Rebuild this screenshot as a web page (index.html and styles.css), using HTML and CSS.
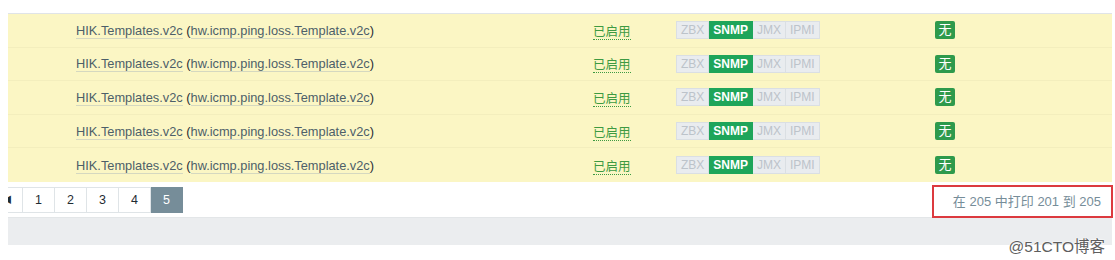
FILE: index.html
```html
<!DOCTYPE html>
<html lang="zh-CN">

<head>
    <meta charset="UTF-8" />
    <title>Templates</title>
    <link rel="stylesheet" href="styles.css">
</head>

<body>
    <div class="page">
        <table class="list-table">
            <tbody id="rows"></tbody>
        </table>
        <div class="paging-row">
            <div class="paging">
                <span class="page-btn page-prev">&#x25C0;</span>
                <span class="page-btn">1</span>
                <span class="page-btn">2</span>
                <span class="page-btn">3</span>
                <span class="page-btn">4</span>
                <span class="page-btn active">5</span>
            </div>
            <div class="table-stats">在 205 中打印 201 到 205</div>
        </div>
        <div class="footer-bar"></div>
    </div>
    <div class="watermark">@51CTO博客</div>

    <script>
        var rows = document.getElementById('rows');
        for (var i = 0; i < 5; i++) {
            var tr = document.createElement('tr');
            tr.innerHTML =
                '<td class="col-check"></td>' +
                '<td class="col-name"><a class="link">HIK.Templates.v2c</a> (<a class="link">hw.icmp.ping.loss.Template.v2c</a>)</td>' +
                '<td class="col-status"><span class="status-on">已启用</span></td>' +
                '<td class="col-avail"><span class="tag">ZBX</span><span class="tag tag-green">SNMP</span><span class="tag">JMX</span><span class="tag">IPMI</span></td>' +
                '<td class="col-enc"><span class="enc">无</span></td>';
            rows.appendChild(tr);
        }
    </script>
</body>

</html>
```

FILE: styles.css
```css
body {
    margin: 0;
    background: #fff;
    font-family: "Liberation Sans", Arial, "Noto Sans CJK SC", sans-serif;
    font-size: 12.8px;
    color: #1f2c33;
}

.page {
    margin: 0 3px 0 8px;
    padding-top: 13px;
}

.list-table {
    width: 100%;
    border-collapse: collapse;
    border-top: 1px solid #e0e4e7;
}

.list-table td {
    background: #fbf6c4;
    height: 32.6px;
    padding: 0;
    border-bottom: 1px solid #f3eebd;
    vertical-align: middle;
    white-space: nowrap;
}

.list-table tr:last-child td {
    border-bottom: none;
    height: 33.6px;
}

.col-check {
    width: 68px;
}

.col-name {
    width: 517px;
}

.col-status {
    width: 83px;
}

.col-avail {
    width: 259px;
}

.link {
    color: #4d5f69;
    border-bottom: 1px solid #d5d8c0;
}

.status-on {
    color: #3d9a42;
    border-bottom: 1px dotted #3d9a42;
    font-size: 12.5px;
}

.tag {
    display: inline-block;
    font-size: 12px;
    line-height: 16px;
    padding: 0 4px;
    background: #e9ecef;
    color: #bcc3ca;
    border: 1px solid #dadfe3;
    border-left: none;
}

.tag:first-child {
    border-left: 1px solid #dadfe3;
}

.tag-green {
    background: #1ea55a;
    border-color: #1ea55a;
    color: #fff;
    font-weight: bold;
}

.enc {
    display: inline-block;
    width: 20px;
    height: 18px;
    line-height: 18px;
    text-align: center;
    background: #2e9a4c;
    color: #fff;
    font-size: 13px;
    border-radius: 2px;
}

.paging-row {
    display: flex;
    justify-content: space-between;
    align-items: flex-start;
    height: 35px;
}

.paging {
    display: flex;
    margin-top: 5px;
    overflow: hidden;
}

.page-btn {
    display: block;
    width: 31px;
    height: 24px;
    line-height: 24px;
    text-align: center;
    border: 1px solid #dfe4e7;
    border-left: none;
    background: #fff;
    color: #1f2c33;
    font-size: 12.5px;
}

.page-prev {
    width: 14px;
    text-align: left;
    text-indent: -5px;
    font-size: 9px;
    overflow: hidden;
}

.page-btn.active {
    background: #768d99;
    border-color: #768d99;
    color: #fff;
}

.table-stats {
    margin-top: 3px;
    margin-right: -1px;
    height: 29px;
    line-height: 29px;
    padding: 0 10px 0 19px;
    border: 2px solid #dc3a3f;
    color: #768d99;
    font-size: 13px;
}

.footer-bar {
    height: 27px;
    background: #ebedef;
    border-top: 1px solid #e3e6e8;
}

.watermark {
    position: absolute;
    right: 10px;
    top: 234px;
    font-size: 15.5px;
    color: #5e5e5e;
    text-shadow: 0 0 2px #fff, 0 0 2px #fff;
}
```
